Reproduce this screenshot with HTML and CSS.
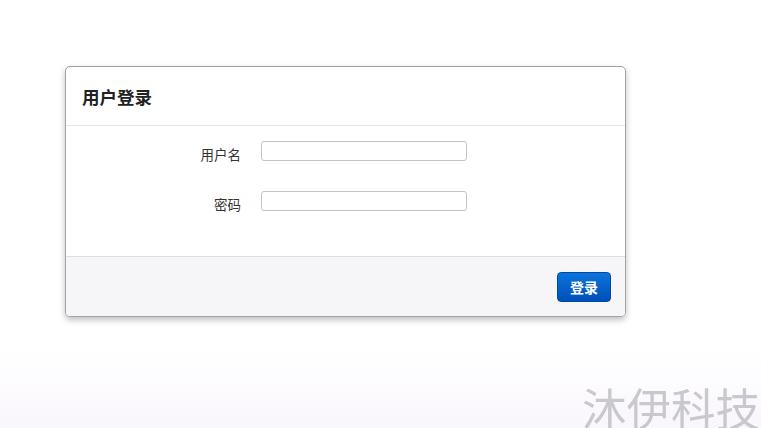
FILE: index.html
```html
<!DOCTYPE html>
<html lang="zh">
<head>
<meta charset="utf-8">
<title>用户登录</title>
<link rel="stylesheet" href="styles.css">
</head>
<body>
<div class="page">
  <form class="card">
    <div class="card-header"><h3 class="title">用户登录</h3></div>
    <div class="card-body">
      <div class="row">
        <label class="label">用户名</label>
        <input class="field" type="text">
      </div>
      <div class="row">
        <label class="label">密码</label>
        <input class="field" type="password">
      </div>
    </div>
    <div class="card-footer">
      <button class="btn" type="button">登录</button>
    </div>
  </form>
</div>
<div class="watermark">沐伊科技</div>
</body>
</html>
```
FILE: styles.css
```css
html, body {
  margin: 0;
  padding: 0;
  height: 100%;
  overflow: hidden;
}
body {
  font-family: "Noto Sans CJK SC", "Noto Sans", sans-serif;
  color: #333;
  background: linear-gradient(to bottom, #ffffff 0px, #ffffff 350px, #f9f6fc 428px);
}
.page {
  padding: 66px 0 0 65px;
}
.card {
  width: 559px;
  border: 1px solid #a3a3a3;
  border-radius: 5px;
  background: #fff;
  box-shadow: 0 3px 6px rgba(0, 0, 0, 0.25);
  overflow: hidden;
}
.card-header {
  height: 58px;
  display: flex;
  align-items: center;
  padding-left: 16px;
  border-bottom: 1px solid #e6e6ea;
}
.title {
  margin: 0;
  font-size: 17.5px;
  font-weight: bold;
  color: #222;
}
.card-body {
  height: 115px;
  padding-top: 15px;
  display: flex;
  flex-direction: column;
  gap: 30px;
}
.row {
  display: flex;
  align-items: center;
  height: 20px;
}
.label {
  width: 175px;
  text-align: right;
  font-size: 13.5px;
  color: #333;
  padding-top: 6px;
  margin-right: 20px;
}
.field {
  box-sizing: border-box;
  width: 206px;
  height: 20px;
  margin: 0;
  border: 1px solid #c3c3c8;
  border-radius: 3px;
  background: #fff;
}
.card-footer {
  height: 59px;
  border-top: 1px solid #dedee2;
  background: #f6f5f8;
  display: flex;
  justify-content: flex-end;
  align-items: center;
  padding-right: 14px;
}
.btn {
  width: 54px;
  height: 30px;
  border: 1px solid #0047a8;
  border-radius: 4px;
  background: linear-gradient(to bottom, #0c74dc, #004fb8);
  color: #fff;
  font-family: "Noto Sans CJK SC", sans-serif;
  font-size: 14px;
  font-weight: bold;
  padding: 0;
}
.watermark {
  position: fixed;
  left: 582px;
  top: 385px;
  font-size: 44.5px;
  line-height: 1;
  color: #c9c8cd;
  white-space: nowrap;
}
```
